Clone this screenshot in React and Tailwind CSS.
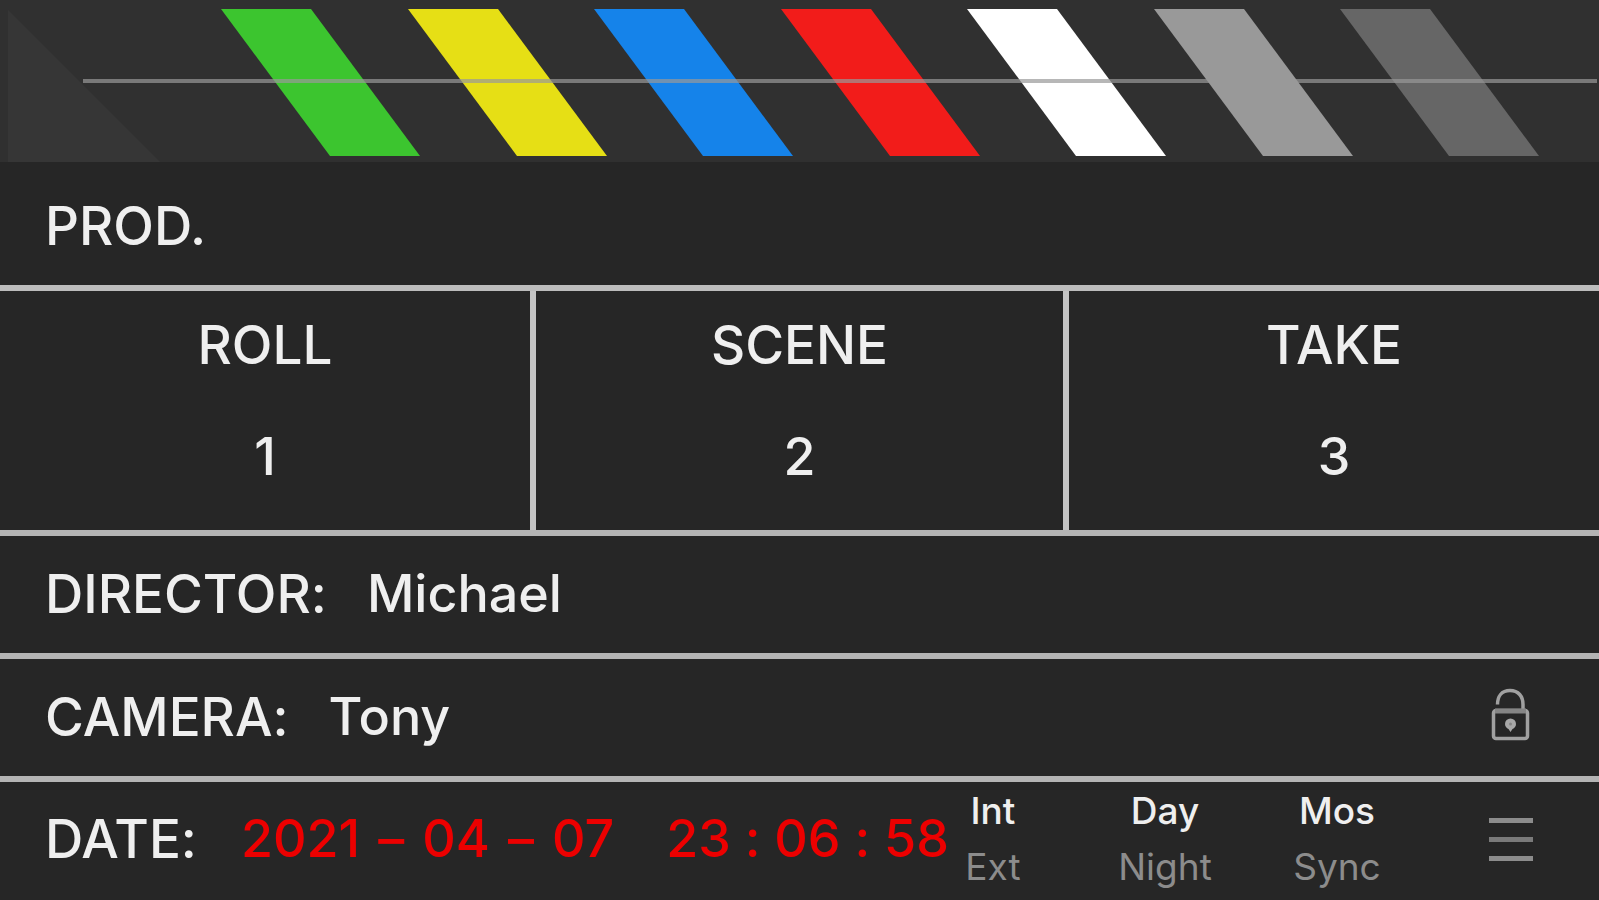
import React, { useState } from 'react'

const STRIPES = [
  { x: 221, color: '#3cc52f' },
  { x: 408, color: '#e6df15' },
  { x: 594, color: '#1583ea' },
  { x: 781, color: '#f21c1a' },
  { x: 967, color: '#ffffff' },
  { x: 1154, color: '#999999' },
  { x: 1340, color: '#666666' },
]

const COUNTERS = [
  { id: 'roll', label: 'ROLL', value: '1' },
  { id: 'scene', label: 'SCENE', value: '2' },
  { id: 'take', label: 'TAKE', value: '3' },
]

const DATE_PARTS = ['2021', '–', '04', '–', '07']

function ClapperBar() {
  return (
    <svg viewBox="0 0 1599 162" preserveAspectRatio="none" className="block w-full h-[162px] bg-[#303030]" aria-hidden="true">
      <polygon points="8,10 160,162 8,162" fill="#363636" />
      {STRIPES.map((s) => (
        <polygon
          key={s.x}
          points={`${s.x},9 ${s.x + 90},9 ${s.x + 199},156 ${s.x + 109},156`}
          fill={s.color}
        />
      ))}
      <rect x="83" y="79" width="1514" height="4" fill="#999999" fillOpacity="0.7" />
    </svg>
  )
}

function Field({ id, label, value }) {
  return (
    <>
      <label htmlFor={id}>{label}</label>
      <input
        id={id}
        type="text"
        defaultValue={value}
        className="flex-1 min-w-0 bg-transparent text-[52px] leading-[60px] outline-none"
      />
    </>
  )
}

function Toggle({ options }) {
  const [active, setActive] = useState(options[0])
  return (
    <div className="w-[88px] flex flex-col items-center text-[37px] leading-[56px]">
      {options.map((o) => (
        <button
          key={o}
          onClick={() => setActive(o)}
          aria-pressed={active === o}
          className={active === o ? 'font-medium text-[#efefef]' : 'font-normal text-[#8c8c8c]'}
        >
          {o}
        </button>
      ))}
    </div>
  )
}

function LockButton() {
  return (
    <button className="shrink-0 w-[44px]" aria-label="Lock">
      <svg viewBox="0 0 44 60" className="block w-[44px] h-[60px]" fill="none" stroke="#a0a0a0" strokeWidth="3.5">
        <path d="M9.500 17.500c0-8 4-14 12.500-14s13 6 13 14v5" />
        <rect x="5.5" y="23.500" width="34" height="28" rx="2.5" />
        <path d="M7 24h31" stroke="#858585" strokeWidth="5" />
        <path d="M22.500 31.500a5.500 5.500 0 0 1 5.500 5.500c0 2.500-1.500 4-3.500 5l-2 3-2-3c-2-1-3.500-2.500-3.500-5a5.500 5.500 0 0 1 5.500-5.500z" fill="#a8a8a8" stroke="none" />
        <circle cx="22.500" cy="37" r="1.500" fill="#858585" stroke="none" />
      </svg>
    </button>
  )
}

function MenuButton() {
  return (
    <button className="shrink-0 w-[44px] flex flex-col gap-[14px]" aria-label="Menu">
      <span className="block w-full h-[5px] bg-[#8c8c8c]"></span>
      <span className="block w-full h-[5px] bg-[#7a7a7a]"></span>
      <span className="block w-full h-[5px] bg-[#8c8c8c]"></span>
    </button>
  )
}

function App() {
  return (
    <div className="min-h-screen flex flex-col bg-[#262626] text-[#efefef] text-[53px] leading-[60px] font-medium font-['Inter','Liberation_Sans',sans-serif] [font-feature-settings:'calt'_0]">
      <ClapperBar />

      {/* Production */}
      <div className="flex items-center gap-10 min-h-[129px] pl-[45px] pr-[67px] pt-1 border-b-[6px] border-[#bcbcbc]">
        <Field id="prod" label="PROD." value="" />
      </div>

      {/* Roll / Scene / Take */}
      <div className="grid grid-cols-3 border-b-[6px] border-[#b4b4b4]">
        {COUNTERS.map((c) => (
          <div
            key={c.id}
            className="flex flex-col items-center gap-[52px] min-w-0 pt-6 pb-[43px] border-x-[3px] border-[#c4c4c4] first:border-l-0 last:border-r-0"
          >
            <label htmlFor={c.id}>{c.label}</label>
            <input
              id={c.id}
              type="text"
              defaultValue={c.value}
              className="w-full bg-transparent text-center text-[52px] leading-[60px] outline-none"
            />
          </div>
        ))}
      </div>

      {/* Crew */}
      <div className="flex items-center gap-10 min-h-[123px] pl-[45px] pr-[67px] pb-0.5 border-b-[6px] border-[#b4b4b4]">
        <Field id="director" label="DIRECTOR:" value="Michael" />
      </div>
      <div className="flex items-center gap-10 min-h-[123px] pl-[45px] pr-[67px] pb-0.5 border-b-[6px] border-[#b4b4b4]">
        <Field id="camera" label="CAMERA:" value="Tony" />
        <LockButton />
      </div>

      {/* Date and shot options */}
      <div className="flex-1 flex items-center min-h-[118px] pl-[45px] pr-[67px] pb-1">
        <span className="mr-11">DATE:</span>
        <div className="flex gap-[52px] text-[52px] text-[#ec0000] whitespace-nowrap">
          <time className="flex gap-[18px]" dateTime="2021-04-07">
            {DATE_PARTS.map((p, i) => (
              <span key={i}>{p}</span>
            ))}
          </time>
          <time dateTime="23:06:58">23 : 06 : 58</time>
        </div>
        <div className="flex gap-[84px] ml-auto mr-[108px]">
          <Toggle options={['Int', 'Ext']} />
          <Toggle options={['Day', 'Night']} />
          <Toggle options={['Mos', 'Sync']} />
        </div>
        <MenuButton />
      </div>
    </div>
  )
}

export default App
